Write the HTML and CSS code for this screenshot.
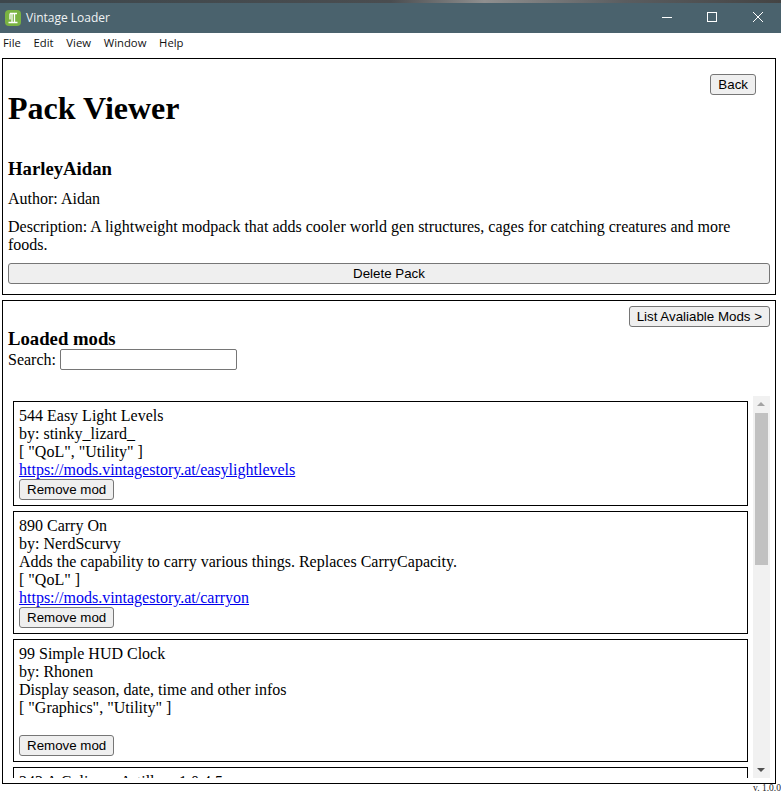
FILE: index.html
```html
<!DOCTYPE html>
<html lang="en">
<head>
<meta charset="utf-8">
<title>Vintage Loader</title>
<link rel="stylesheet" href="styles.css">
</head>
<body>
<div class="strip"></div>
<header class="titlebar">
  <svg class="logo" width="16" height="16" viewBox="0 0 16 16"><rect width="16" height="16" rx="4" fill="#7ab342"/><path d="M5 3.500h7M7 3.500v9M9.500 3.500v9M3.500 12.500h9M5 3.500v6" fill="none" stroke="#fff" stroke-width="1.3"/></svg>
  <span class="title">Vintage Loader</span>
  <div class="winctl">
    <svg width="46" height="30" viewBox="0 0 46 30"><path d="M19 14.500h10" stroke="#fff"/></svg>
    <svg width="46" height="30" viewBox="0 0 46 30"><rect x="18.500" y="9.500" width="9" height="9" fill="none" stroke="#fff"/></svg>
    <svg width="46" height="30" viewBox="0 0 46 30"><path d="M18 9l10 10M28 9l-10 10" stroke="#fff" fill="none"/></svg>
  </div>
</header>
<nav class="menu"><span>File</span><span>Edit</span><span>View</span><span>Window</span><span>Help</span></nav>
<main class="content">
  <section class="panel top">
    <button class="btn back">Back</button>
    <h1>Pack Viewer</h1>
    <h3>HarleyAidan</h3>
    <p>Author: Aidan</p>
    <p>Description: A lightweight modpack that adds cooler world gen structures, cages for catching creatures and more foods.</p>
    <button class="btn wide">Delete Pack</button>
  </section>
  <section class="panel mods">
    <button class="btn list">List Avaliable Mods &gt;</button>
    <h3 class="loaded">Loaded mods</h3>
    <label class="search">Search: <input type="text"></label>
    <div class="listwrap">
      <div class="modlist">
        <article class="mod">
          <div>544 Easy Light Levels</div>
          <div>by: stinky_lizard_</div>
          <div>[ "QoL", "Utility" ]</div>
          <a href="#">https://mods.vintagestory.at/easylightlevels</a>
          <button class="btn remove">Remove mod</button>
        </article>
        <article class="mod">
          <div>890 Carry On</div>
          <div>by: NerdScurvy</div>
          <div>Adds the capability to carry various things. Replaces CarryCapacity.</div>
          <div>[ "QoL" ]</div>
          <a href="#">https://mods.vintagestory.at/carryon</a>
          <button class="btn remove">Remove mod</button>
        </article>
        <article class="mod">
          <div>99 Simple HUD Clock</div>
          <div>by: Rhonen</div>
          <div>Display season, date, time and other infos</div>
          <div>[ "Graphics", "Utility" ]</div>
          <div class="blank"></div>
          <button class="btn remove">Remove mod</button>
        </article>
        <article class="mod">
          <div>243 A Culinary Artillery 1.0.4.5</div>
        </article>
      </div>
      <div class="scrollbar">
        <span class="arrow up"></span>
        <div class="track"><div class="thumb"></div></div>
        <span class="arrow down"></span>
      </div>
    </div>
  </section>
</main>
<footer class="version">v. 1.0.0</footer>
</body>
</html>
```
FILE: styles.css
```css
* { box-sizing: border-box; }
html, body { height: 100%; }
body {
  margin: 0;
  width: 781px;
  height: 793px;
  overflow: hidden;
  background: #fff;
  color: #000;
  font-family: "Liberation Serif", "Times New Roman", serif;
  font-size: 16px;
  line-height: 18px;
  display: flex;
  flex-direction: column;
}
.strip {
  height: 3px;
  background: linear-gradient(90deg, #3d474c 0%, #4a4d50 50%, #8f8f8f 62%, #5a5d60 80%, #444 100%);
}
.titlebar {
  height: 30px;
  background: #4a626d;
  display: flex;
  align-items: center;
  padding-left: 5px;
  color: #fff;
  font-family: "Open Sans", "Liberation Sans", sans-serif;
  font-size: 12px;
}
.logo { margin-right: 5px; margin-top: -1px; }
.title { flex: 1; color: #f0f3f4; }
.winctl { display: flex; }
.winctl svg { display: block; }
.menu {
  height: 19px;
  margin-bottom: 2px;
  display: flex;
  gap: 12.700px;
  padding-left: 3px;
  align-items: center;
  font-family: "Open Sans", "Liberation Sans", sans-serif;
  font-size: 11.300px;
  color: #111;
}
.content {
  padding: 4px 5px 0 2px;
  display: flex;
  flex-direction: column;
  gap: 5px;
}
.panel {
  border: 1px solid #000;
  padding: 5px;
  position: relative;
}
.top { height: 237px; }
.mods { height: 484px; overflow: hidden; }
.btn {
  font-family: "Liberation Sans", Arial, sans-serif;
  font-size: 13.333px;
  line-height: 15px;
  height: 21px;
  padding: 1px 6px;
  color: #000;
  background: #efefef;
  border: 1px solid #767676;
  border-radius: 3px;
  display: block;
}
.back {
  position: absolute;
  top: 15px;
  right: 19px;
  padding: 1px 7px;
}
h1 {
  margin: 0;
  padding-top: 26px;
  font-size: 32px;
  line-height: 37px;
  font-weight: bold;
}
h3 {
  margin: 0;
  font-size: 18.720px;
  line-height: 21px;
  font-weight: bold;
}
.top h3 { margin-top: 31px; }
p { margin: 0; }
.top h3 + p { margin-top: 11px; }
.top p + p { margin-top: 10px; }
.wide { width: 100%; margin-top: 9px; }
.list { margin-left: auto; padding: 1px 7px; }
.loaded { margin-top: 1px; }
.search { display: block; line-height: 21px; }
.search input {
  width: 177px;
  height: 21px;
  border: 1px solid #767676;
  border-radius: 2px;
  padding: 1px 2px;
  vertical-align: top;
  background: #fff;
}
.listwrap {
  margin-top: 26px;
  height: 382px;
  width: 762px;
  display: flex;
}
.modlist {
  flex: 1;
  min-width: 0;
  overflow: hidden;
  padding: 5px 5px 0 5px;
  display: flex;
  flex-direction: column;
  gap: 5px;
}
.scrollbar {
  width: 17px;
  flex: none;
  background: #f1f1f1;
  display: flex;
  flex-direction: column;
}
.arrow { height: 17px; flex: none; position: relative; }
.arrow::before {
  content: "";
  position: absolute;
  left: 4px;
  border-left: 4.500px solid transparent;
  border-right: 4.500px solid transparent;
}
.up::before { top: 6px; border-bottom: 4px solid #a3a3a3; }
.down::before { top: 7px; border-top: 4px solid #505050; }
.track { flex: 1; padding: 0 2px; }
.thumb { height: 152px; background: #c1c1c1; }
.mod {
  flex: none;
  width: 735px;
  border: 1px solid #000;
  padding: 5px;
}
.mod a { color: #00e; display: block; }
.blank { height: 18px; }
.remove { padding: 1px 7px; }
.version {
  position: absolute;
  right: 0;
  top: 784px;
  font-size: 9.500px;
  line-height: 9px;
  color: #222;
}
```
